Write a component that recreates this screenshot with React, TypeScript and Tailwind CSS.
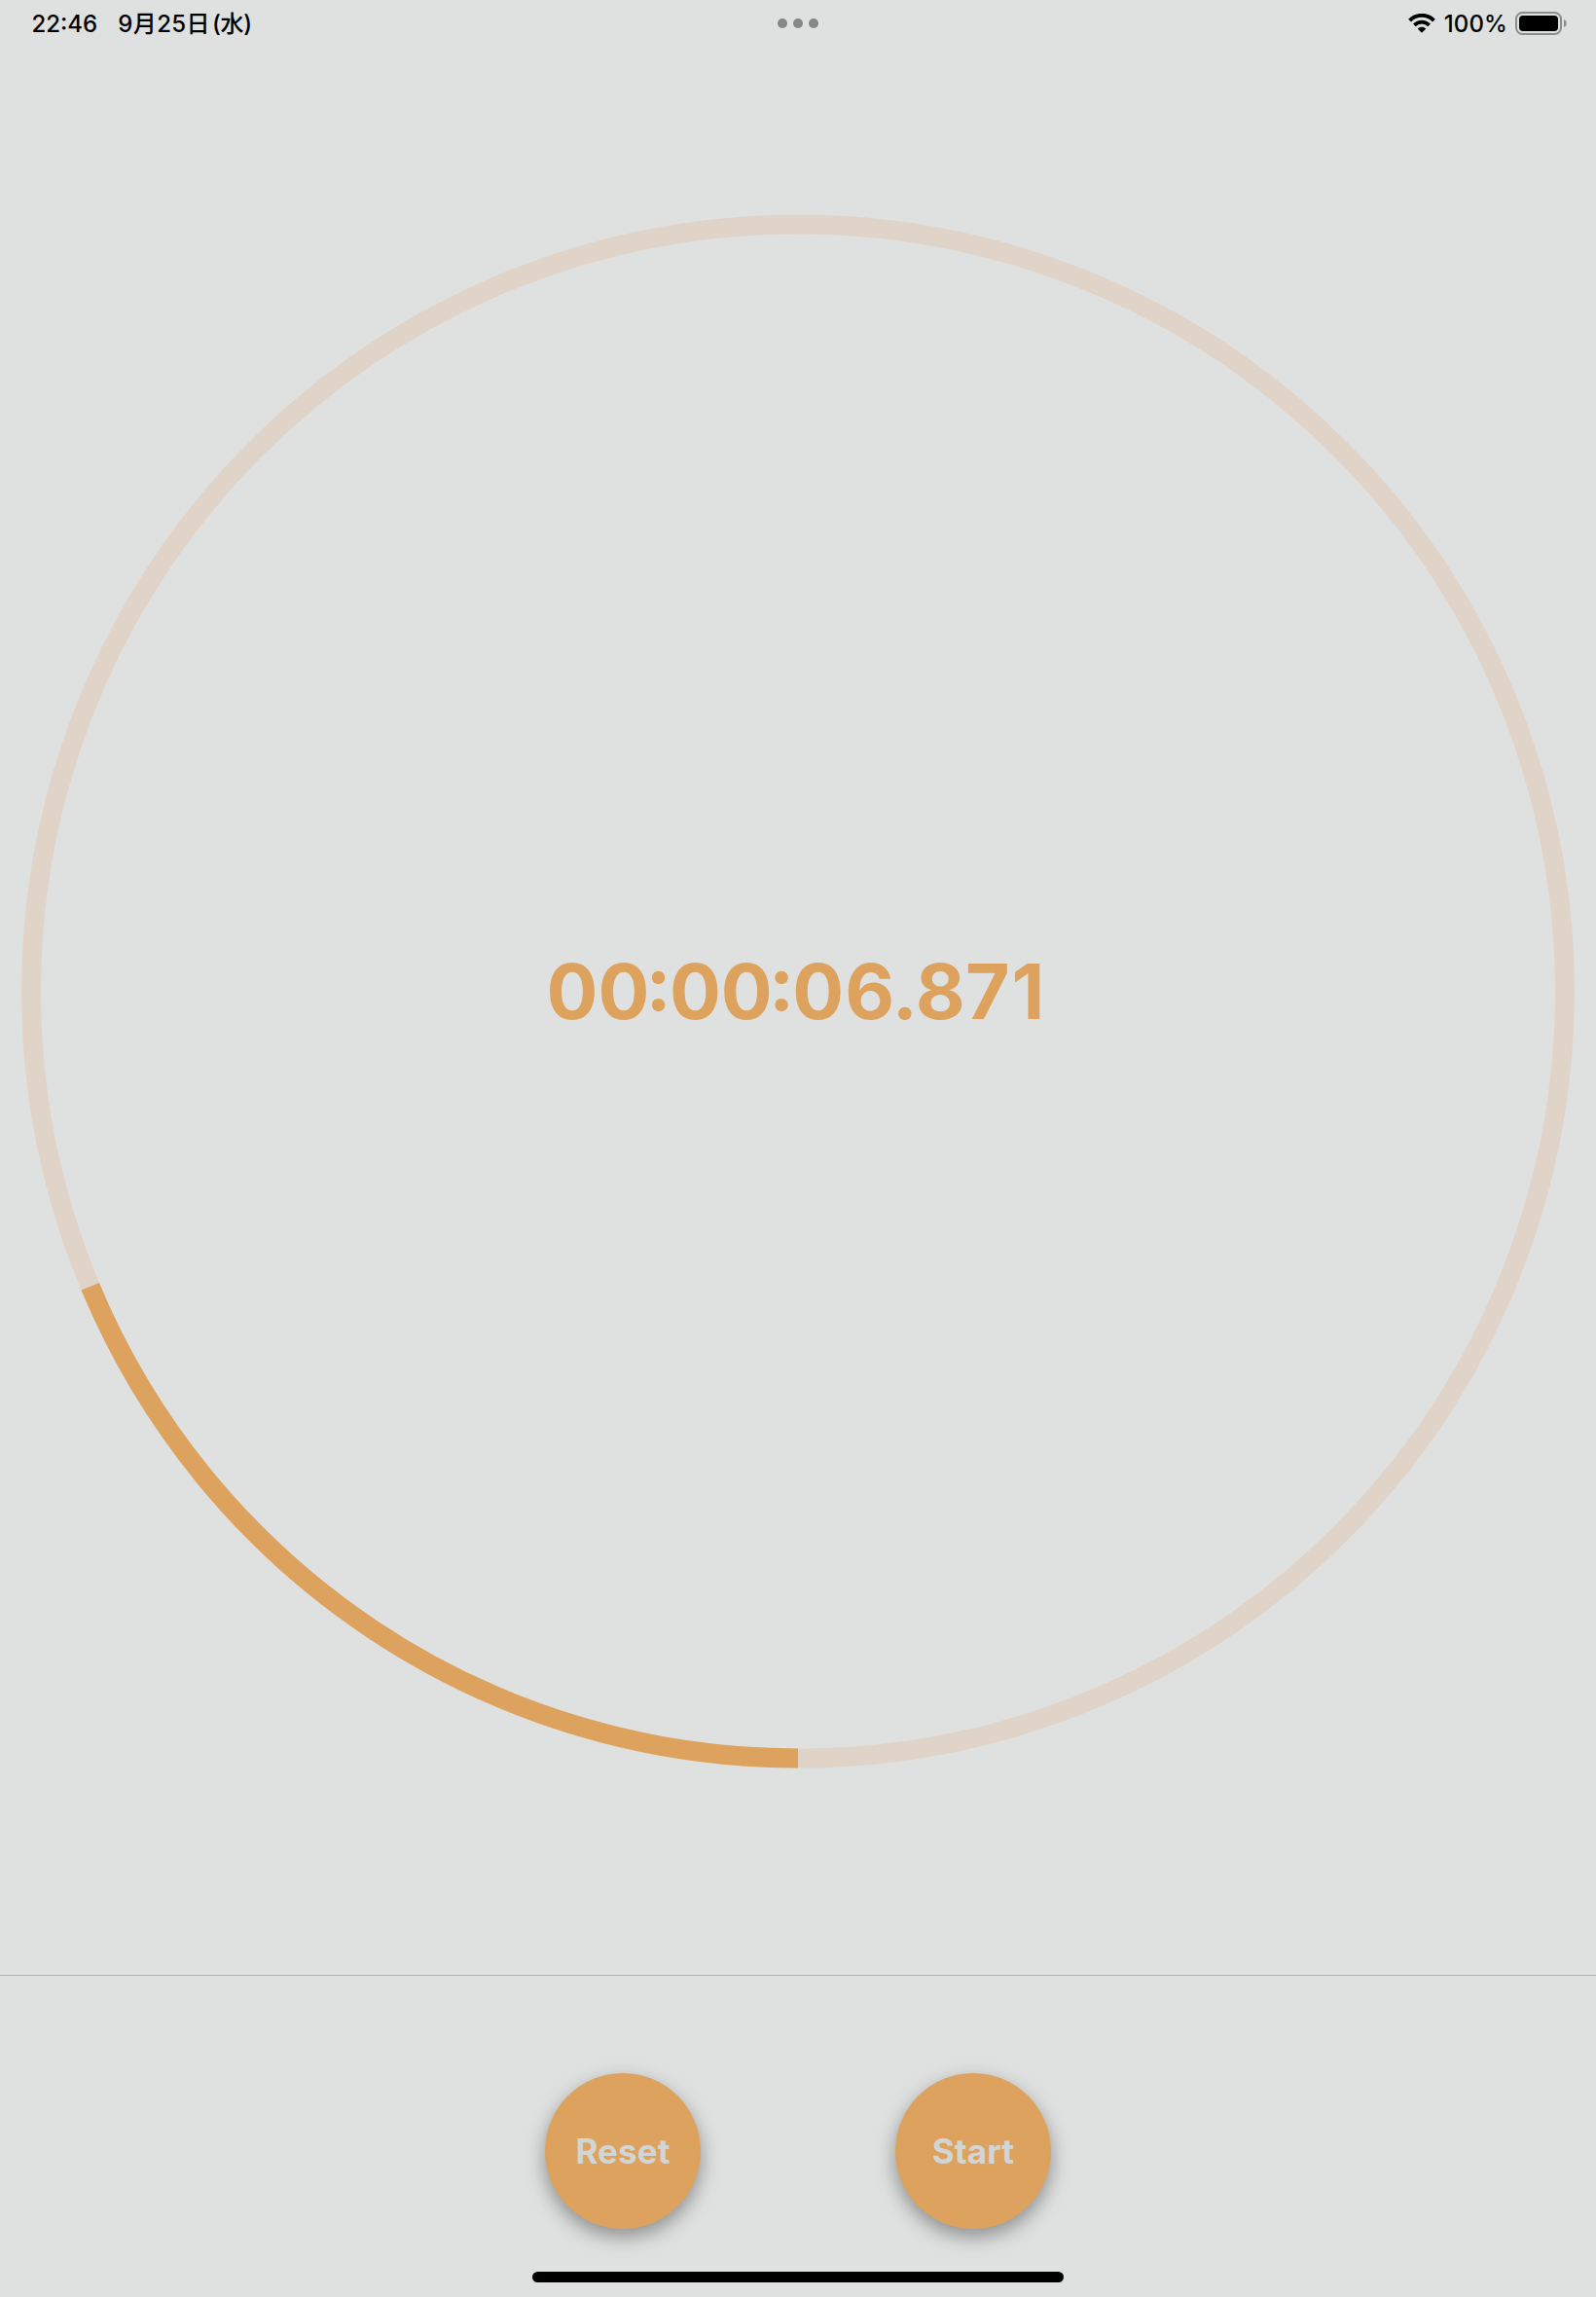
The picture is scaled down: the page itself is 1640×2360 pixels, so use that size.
const RADIUS = 788;
const CIRCUMFERENCE = 2 * Math.PI * RADIUS;
const SWEEP = 67.356 / 360;

function WifiIcon() {
  return (
    <svg className="h-5 w-[28px]" viewBox="0 0 28 20" fill="none">
      <path d="M1.6 7.1C8.4 .1 19.6 .1 26.4 7.1" stroke="#000" strokeWidth="4" />
      <path d="M6.4 11.9C10.6 7.6 17.4 7.6 21.6 11.9" stroke="#000" strokeWidth="3.8" />
      <path d="M14 19.8L9.7 15.4C12.1 13.2 15.9 13.2 18.3 15.4Z" fill="#000" />
    </svg>
  );
}

function BatteryIcon() {
  return (
    <svg className="h-6 w-[53px]" viewBox="0 0 53 24" fill="none">
      <rect x="1" y="1" width="46" height="22" rx="6.5" stroke="#8b8d8c" strokeWidth="2" />
      <rect x="4" y="4" width="40" height="16" rx="4" fill="#000" />
      <path d="M50 8C53.6 9.2 53.6 14.8 50 16Z" fill="#8b8d8c" />
    </svg>
  );
}

function StatusBar() {
  return (
    <header className="grid h-12 grid-cols-3 items-center px-[30px] text-[24px] font-medium leading-6 text-black">
      <div className="mt-0.5 flex items-center whitespace-nowrap pl-[2.5px]">
        <span>22:46</span>
        <span className="ml-[21px] tracking-[0.4px]">9月25日</span>
        <span className="ml-[2px] tracking-[-0.3px]">(水)</span>
      </div>
      <div className="flex justify-center gap-1.5">
        <i className="size-2.5 rounded-full bg-[#868887]" />
        <i className="size-2.5 rounded-full bg-[#868887]" />
        <i className="size-2.5 rounded-full bg-[#868887]" />
      </div>
      <div className="flex items-center justify-end">
        <WifiIcon />
        <span className="ml-[9px] mr-2 mt-0.5 tracking-[0.1px]">100%</span>
        <BatteryIcon />
      </div>
    </header>
  );
}

function Colon() {
  return <span className="-ml-[3.9px] -mr-[1.9px] [font-feature-settings:'case']">:</span>;
}

function Dial() {
  return (
    <div className="relative mx-auto mt-[172px] size-[1596px]">
      <svg className="size-full overflow-visible" viewBox="-798 -798.5 1596 1596" fill="none">
        <circle r={RADIUS} stroke="#e0d4c9" strokeWidth="20" />
        <circle
          r={RADIUS}
          stroke="#dda35e"
          strokeWidth="20"
          strokeDasharray={`${CIRCUMFERENCE * SWEEP} ${CIRCUMFERENCE}`}
          transform="rotate(90)"
        />
      </svg>
      <div className="absolute inset-0 flex items-center justify-center pr-[5px] pt-[3px] text-[78.5px] font-bold leading-none text-[#dda35e]">
        <div className="whitespace-nowrap">
          00
          <Colon />
          00
          <Colon />0<span className="ml-px">6.87</span>
          <span className="ml-0.5">1</span>
        </div>
      </div>
    </div>
  );
}

function RoundButton({ label }: { label: string }) {
  return (
    <button className="flex size-40 items-center justify-center rounded-full bg-[#dda35e] text-[35px] font-bold tracking-[0.1px] text-[#d1d5d6] shadow-[0_8px_20px_rgba(0,0,0,0.37)]">
      {label}
    </button>
  );
}

export default function App() {
  return (
    <main className="flex h-[2360px] w-[1640px] flex-col overflow-hidden bg-[#dfe1e0] font-['Inter','Noto_Sans_CJK_JP',sans-serif]">
      <StatusBar />
      <section className="flex h-[1981px] shrink-0 flex-col">
        <Dial />
      </section>
      <footer className="flex grow flex-col items-center border-t border-[#aeb0af] pt-[100px]">
        <div className="flex gap-[200px]">
          <RoundButton label="Reset" />
          <RoundButton label="Start" />
        </div>
        <div className="mt-11 h-[11px] w-[546px] rounded-full bg-black" />
      </footer>
    </main>
  );
}
